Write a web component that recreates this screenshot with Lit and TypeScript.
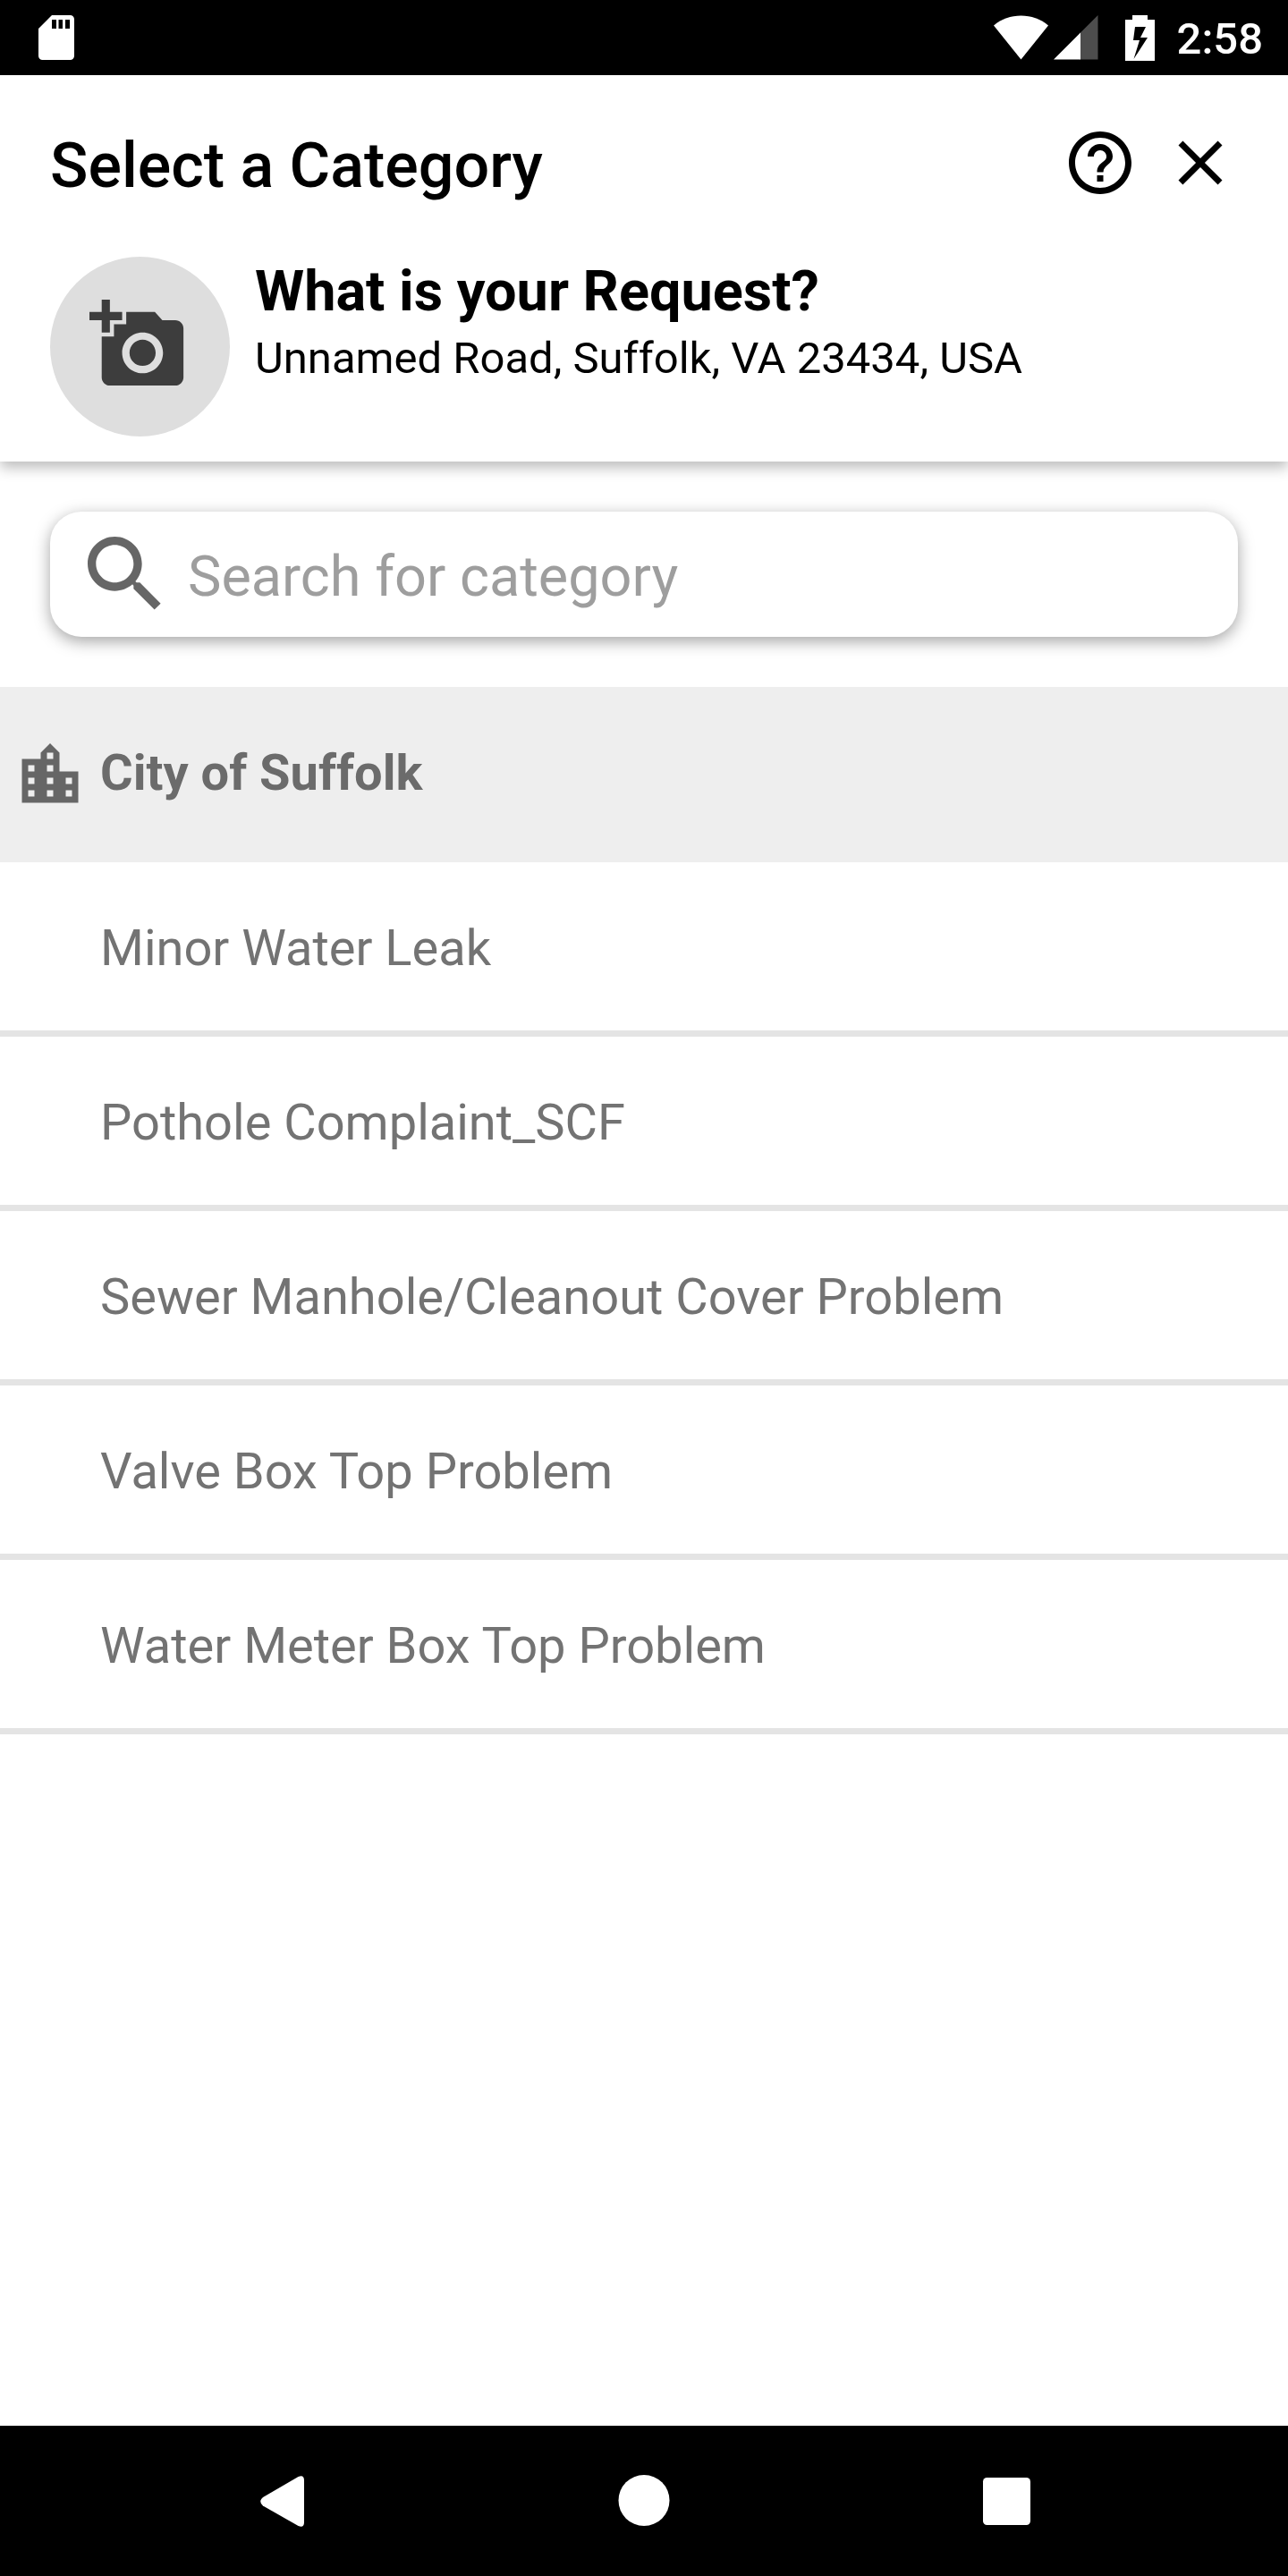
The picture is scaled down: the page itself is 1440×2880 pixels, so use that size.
import { LitElement, html, css } from "lit";
import { customElement, property, state } from "lit/decorators.js";

@customElement("status-bar")
export class StatusBar extends LitElement {
  static styles = css`
    :host {
      display: block;
    }
    .bar {
      display: flex;
      align-items: center;
      height: 84px;
      box-sizing: border-box;
      padding: 0 28px 0 42px;
      background: #000;
      color: #fff;
    }
    .card {
      width: 42px;
      height: 50px;
      margin-right: auto;
    }
    .radio {
      width: 118px;
      height: 50px;
      margin-right: 28px;
    }
    .battery {
      width: 36px;
      height: 52px;
      margin-right: 24px;
    }
    .time {
      font-size: 49px;
      font-weight: 500;
      line-height: 60px;
      padding-top: 4px;
    }
  `;

  render() {
    return html`
      <div class="bar">
        <svg class="card" viewBox="0 0 42 50" aria-hidden="true">
          <path
            fill="#fff"
            fill-rule="evenodd"
            d="M16 0h20.500a4.500 4.500 0 0 1 4.500 4.500v41a4.500 4.500 0 0 1-4.500 4.500H5.500A4.500 4.500 0 0 1 1 45.500V15zM16 5v10h5V5zM23.500 5v10h4.500V5zM31 5v10h5V5z"
          />
        </svg>
        <svg class="radio" viewBox="0 0 118 50" aria-hidden="true">
          <path fill="#fff" d="M31.500 49.500L1 11.500C10 4 20 .5 31.500 .5S53 4 62 11.500z" />
          <path fill="#4d4d4d" d="M97 20.500L117.500 0v49.500H97z" />
          <path fill="#fff" d="M68 49.500L98 19.500v30z" />
        </svg>
        <svg class="battery" viewBox="0 0 36 52" aria-hidden="true">
          <path
            fill="#fff"
            fill-rule="evenodd"
            d="M10 1h17v5h8v46H2V6h8zM13 14l-2 15h7l-6.500 21L27 26h-8l6-12z"
          />
        </svg>
        <span class="time">2:58</span>
      </div>
    `;
  }
}

@customElement("request-header")
export class RequestHeader extends LitElement {
  @property() heading = "";
  @property() question = "";
  @property() address = "";

  static styles = css`
    :host {
      display: block;
    }
    .header {
      box-sizing: border-box;
      padding: 56px 56px 28px;
      background: #fff;
      box-shadow: 0 7px 14px rgba(0, 0, 0, 0.26);
    }
    .top {
      display: flex;
      align-items: center;
      gap: 28px;
      height: 84px;
    }
    h1 {
      flex: 1;
      margin: 0;
      padding-top: 6px;
      font-size: 70px;
      font-weight: 500;
      line-height: 84px;
    }
    button {
      display: block;
      border: 0;
      padding: 0;
      background: none;
      cursor: pointer;
    }
    .icon {
      display: block;
      width: 84px;
      height: 84px;
    }
    .request {
      display: flex;
      gap: 28px;
      margin-top: 63px;
    }
    .photo {
      flex: none;
    }
    .avatar {
      display: block;
      width: 201px;
      height: 201px;
    }
    h2 {
      margin: 0;
      font-size: 63px;
      font-weight: 700;
      line-height: 78px;
    }
    p {
      margin: 0;
      font-size: 49px;
      line-height: 72px;
    }
  `;

  render() {
    return html`
      <header class="header">
        <div class="top">
          <h1>${this.heading}</h1>
          <button type="button" aria-label="Help">
            <svg class="icon" viewBox="0 0 24 24">
              <path
                d="M11 18h2v-2h-2v2zm1-16C6.480 2 2 6.480 2 12s4.480 10 10 10 10-4.480 10-10S17.520 2 12 2zm0 18c-4.410 0-8-3.590-8-8s3.590-8 8-8 8 3.590 8 8-3.590 8-8 8zm0-14c-2.210 0-4 1.790-4 4h2c0-1.100.9-2 2-2s2 .9 2 2c0 2-3 1.750-3 5h2c0-2.250 3-2.500 3-5 0-2.210-1.790-4-4-4z"
              />
            </svg>
          </button>
          <button type="button" aria-label="Close">
            <svg class="icon" viewBox="0 0 24 24">
              <path
                d="M19 6.410L17.590 5 12 10.590 6.410 5 5 6.410 10.590 12 5 17.590 6.410 19 12 13.410 17.590 19 19 17.590 13.410 12z"
              />
            </svg>
          </button>
        </div>
        <div class="request">
          <button class="photo" type="button" aria-label="Add a photo">
            <svg class="avatar" viewBox="0 0 201 201">
              <circle cx="100.500" cy="100.500" r="100.500" fill="#dedede" />
              <path
                transform="translate(44 43.500) scale(4.570)"
                fill="#3d3d3d"
                d="M3 4V1h2v3h3v2H5v3H3V6H0V4h3zm3 6V7h3V4h7l1.830 2H21c1.100 0 2 .9 2 2v12c0 1.100-.9 2-2 2H5c-1.100 0-2-.9-2-2V10h3zm7 9c2.760 0 5-2.240 5-5s-2.240-5-5-5-5 2.240-5 5 2.240 5 5 5zm-3.200-5c0 1.770 1.430 3.200 3.200 3.200s3.200-1.430 3.200-3.200-1.430-3.200-3.200-3.200-3.200 1.430-3.200 3.200z"
              />
            </svg>
          </button>
          <div>
            <h2>${this.question}</h2>
            <p>${this.address}</p>
          </div>
        </div>
      </header>
    `;
  }
}

@customElement("category-search")
export class CategorySearch extends LitElement {
  @property() value = "";

  static styles = css`
    :host {
      display: block;
    }
    .box {
      display: flex;
      align-items: center;
      gap: 14px;
      height: 140px;
      box-sizing: border-box;
      margin: 56px;
      padding: 0 28px;
      border-radius: 35px;
      background: #fff;
      box-shadow: 0 5px 18px rgba(0, 0, 0, 0.36);
    }
    .glass {
      flex: none;
      width: 112px;
      height: 112px;
      fill: #666;
    }
    input {
      flex: 1;
      min-width: 0;
      height: 112px;
      box-sizing: border-box;
      border: 0;
      padding: 4px 0 0;
      outline: 0;
      background: none;
      color: #000;
      font-family: inherit;
      font-size: 63px;
    }
    input::placeholder {
      color: #9e9e9e;
      opacity: 1;
    }
  `;

  private onInput(e: Event) {
    this.value = (e.target as HTMLInputElement).value;
    this.dispatchEvent(new CustomEvent("search", { detail: this.value }));
  }

  render() {
    return html`
      <label class="box">
        <svg class="glass" viewBox="0 0 24 24" aria-hidden="true">
          <path
            d="M15.500 14h-.790l-.280-.270C15.410 12.590 16 11.110 16 9.500 16 5.910 13.090 3 9.500 3S3 5.910 3 9.500 5.910 16 9.500 16c1.610 0 3.090-.590 4.230-1.570l.270.280v.790l5 4.990L20.490 19l-4.990-5zm-6 0C7.010 14 5 11.990 5 9.500S7.010 5 9.500 5 14 7.010 14 9.500 11.990 14 9.500 14z"
          />
        </svg>
        <input
          type="text"
          aria-label="Search for category"
          placeholder="Search for category"
          .value=${this.value}
          @input=${this.onInput}
        />
      </label>
    `;
  }
}

@customElement("category-list")
export class CategoryList extends LitElement {
  @property() group = "";
  @property({ attribute: false }) items: string[] = [];

  static styles = css`
    :host {
      display: block;
    }
    .group {
      display: flex;
      align-items: center;
      gap: 14px;
      height: 196px;
      margin: 0;
      padding: 0 14px;
      box-sizing: border-box;
      background: #eee;
      color: #6b6b6b;
      font-size: 56px;
      font-weight: 700;
    }
    .name {
      padding-bottom: 4px;
    }
    .city {
      width: 84px;
      height: 84px;
      fill: #666;
    }
    ul {
      margin: 0;
      padding: 0;
      list-style: none;
    }
    .item {
      display: block;
      width: 100%;
      height: 195px;
      border: 0;
      padding: 0 56px 4px 112px;
      background: none;
      box-shadow: inset 0 -7px #e4e4e4;
      color: #737373;
      font-family: inherit;
      font-size: 56px;
      text-align: left;
      cursor: pointer;
    }
  `;

  render() {
    return html`
      <h2 class="group">
        <svg class="city" viewBox="0 0 24 24" aria-hidden="true">
          <path
            d="M15 11V5l-3-3-3 3v2H3v14h18V11h-6zm-8 8H5v-2h2v2zm0-4H5v-2h2v2zm0-4H5V9h2v2zm6 8h-2v-2h2v2zm0-4h-2v-2h2v2zm0-4h-2V9h2v2zm0-4h-2V5h2v2zm6 12h-2v-2h2v2zm0-4h-2v-2h2v2z"
          />
        </svg>
        <span class="name">${this.group}</span>
      </h2>
      <ul>
        ${this.items.map(
          (item) => html`<li><button class="item" type="button">${item}</button></li>`
        )}
      </ul>
    `;
  }
}

@customElement("nav-bar")
export class NavBar extends LitElement {
  static styles = css`
    :host {
      display: block;
    }
    nav {
      display: grid;
      grid-template-columns: repeat(3, 1fr);
      height: 168px;
      box-sizing: border-box;
      padding: 0 111px;
      background: #000;
    }
    button {
      display: flex;
      align-items: center;
      justify-content: center;
      border: 0;
      padding: 0;
      background: none;
      cursor: pointer;
    }
    .icon {
      width: 84px;
      height: 84px;
      fill: #fff;
    }
  `;

  render() {
    return html`
      <nav>
        <button type="button" aria-label="Back">
          <svg class="icon" viewBox="0 0 84 84">
            <path
              d="M61.500 15Q68 12.500 68 19V66Q68 72.500 61.500 70L22 47.500Q16.500 42.500 22 38z"
            />
          </svg>
        </button>
        <button type="button" aria-label="Home">
          <svg class="icon" viewBox="0 0 84 84">
            <circle cx="42" cy="41.500" r="28.500" />
          </svg>
        </button>
        <button type="button" aria-label="Overview">
          <svg class="icon" viewBox="0 0 84 84">
            <rect x="15" y="16" width="53" height="53" rx="4.500" />
          </svg>
        </button>
      </nav>
    `;
  }
}

@customElement("app-root")
export class AppRoot extends LitElement {
  @state() private query = "";

  private categories = [
    "Minor Water Leak",
    "Pothole Complaint_SCF",
    "Sewer Manhole/Cleanout Cover Problem",
    "Valve Box Top Problem",
    "Water Meter Box Top Problem",
  ];

  static styles = css`
    :host {
      display: flex;
      flex-direction: column;
      min-height: 100vh;
      background: #fff;
      color: #000;
      font-family: Roboto, sans-serif;
    }
    main {
      flex: 1;
    }
  `;

  render() {
    const q = this.query.trim().toLowerCase();
    return html`
      <status-bar></status-bar>
      <request-header
        heading="Select a Category"
        question="What is your Request?"
        address="Unnamed Road, Suffolk, VA 23434, USA"
      ></request-header>
      <main>
        <category-search
          @search=${(e: CustomEvent<string>) => (this.query = e.detail)}
        ></category-search>
        <category-list
          group="City of Suffolk"
          .items=${this.categories.filter((c) => c.toLowerCase().includes(q))}
        ></category-list>
      </main>
      <nav-bar></nav-bar>
    `;
  }
}
